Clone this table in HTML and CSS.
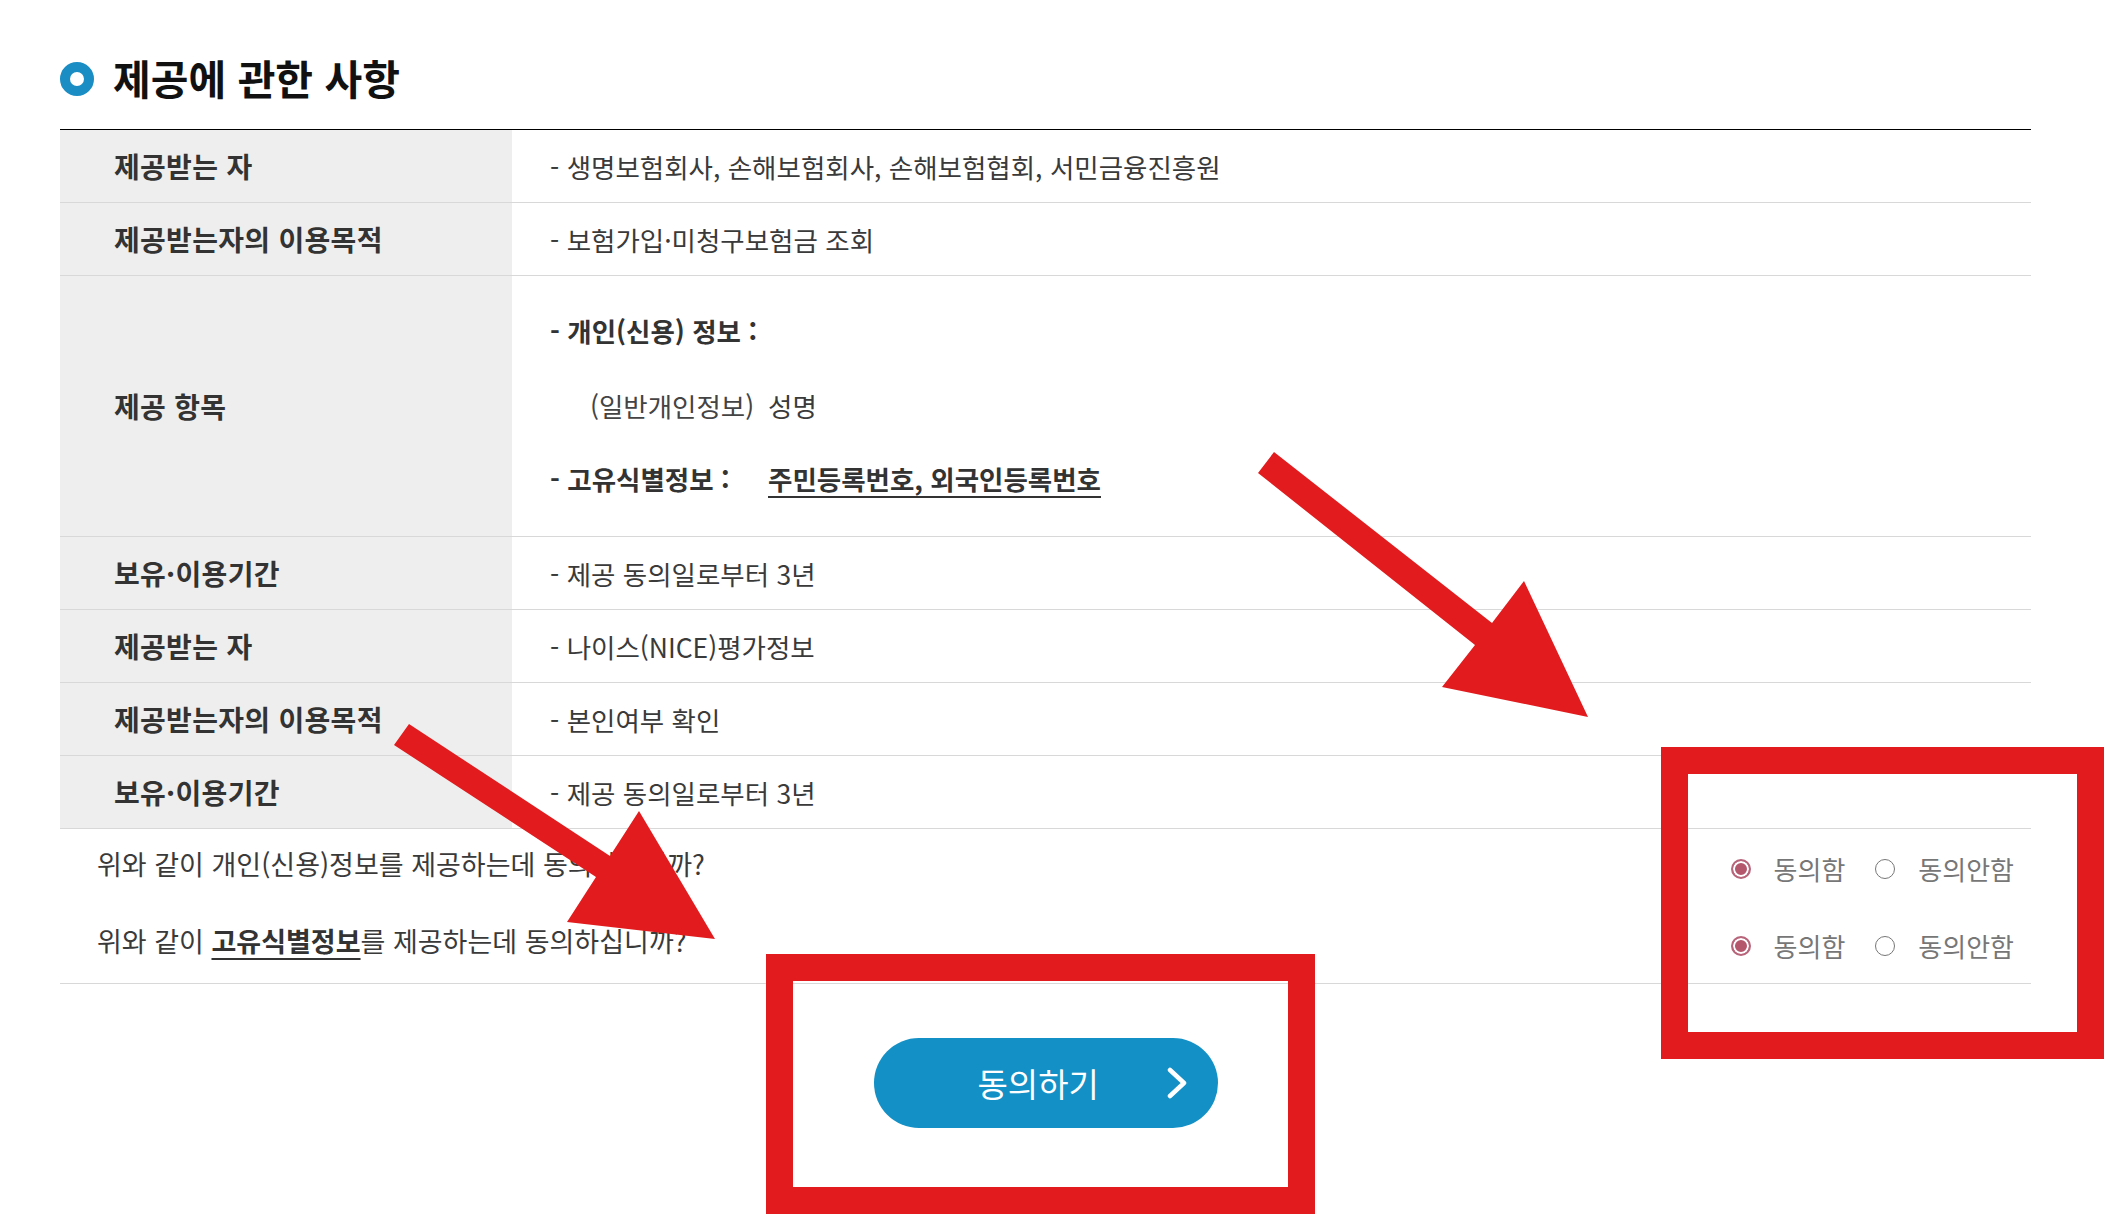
FILE: index.html
```html
<!DOCTYPE html>
<html lang="ko">
<head>
<meta charset="utf-8">
<title>제공에 관한 사항</title>
<link rel="stylesheet" href="styles.css">
</head>
<body>
<div class="page">
  <h2 class="title"><span class="ring"></span><span class="title-text">제공에 관한 사항</span></h2>

  <div class="table">
    <div class="row">
      <div class="th">제공받는 자</div>
      <div class="td">- 생명보험회사, 손해보험회사, 손해보험협회, 서민금융진흥원</div>
    </div>
    <div class="row">
      <div class="th">제공받는자의 이용목적</div>
      <div class="td">- 보험가입·미청구보험금 조회</div>
    </div>
    <div class="row row-tall">
      <div class="th">제공 항목</div>
      <div class="td">
        <div class="items">
          <div class="item-head">- 개인(신용) 정보 :</div>
          <div class="item-sub">(일반개인정보)</div>
          <div class="item-plain">성명</div>
          <div class="item-key">- 고유식별정보 :</div>
          <div class="item-val">주민등록번호, 외국인등록번호</div>
        </div>
      </div>
    </div>
    <div class="row">
      <div class="th">보유·이용기간</div>
      <div class="td">- 제공 동의일로부터 3년</div>
    </div>
    <div class="row">
      <div class="th">제공받는 자</div>
      <div class="td">- 나이스(NICE)평가정보</div>
    </div>
    <div class="row">
      <div class="th">제공받는자의 이용목적</div>
      <div class="td">- 본인여부 확인</div>
    </div>
    <div class="row">
      <div class="th">보유·이용기간</div>
      <div class="td">- 제공 동의일로부터 3년</div>
    </div>
  </div>

  <div class="consent">
    <div class="q-row">
      <p class="question">위와 같이 개인(신용)정보를 제공하는데 동의하십니까?</p>
      <div class="radios">
        <span class="radio checked"></span><span class="radio-label">동의함</span>
        <span class="radio"></span><span class="radio-label">동의안함</span>
      </div>
    </div>
    <div class="q-row">
      <p class="question">위와 같이 <strong class="key-term">고유식별정보</strong>를 제공하는데 동의하십니까?</p>
      <div class="radios">
        <span class="radio checked"></span><span class="radio-label">동의함</span>
        <span class="radio"></span><span class="radio-label">동의안함</span>
      </div>
    </div>
  </div>

  <div class="actions">
    <button class="agree-btn" type="button">
      <span class="agree-text">동의하기</span>
      <svg class="chev" width="22" height="32" viewBox="0 0 22 32"><polyline points="4,3 18,16 4,29" fill="none" stroke="#fff" stroke-width="4.5" stroke-linecap="round" stroke-linejoin="round"/></svg>
    </button>
  </div>
</div>

<svg class="annotations" width="2105" height="1214" viewBox="0 0 2105 1214">
  <polygon points="1274,452 1492,623 1524,581 1588,717 1442,687 1475,645 1258,473" fill="#e21c1e"/>
  <polygon points="409,724 610,856 639,811 715,939 567,922 596,877 394,745" fill="#e21c1e"/>
  <rect x="779.5" y="967.5" width="522" height="233" fill="none" stroke="#e21c1e" stroke-width="27"/>
  <rect x="1674.5" y="760.5" width="416" height="285" fill="none" stroke="#e21c1e" stroke-width="27"/>
</svg>
</body>
</html>
```

FILE: styles.css
```css
html, body {
  margin: 0;
  padding: 0;
  background: #fff;
  overflow: hidden;
}

body {
  font-family: "Noto Sans CJK KR", "Noto Sans", sans-serif;
  color: #333;
}

.page {
  width: 1971px;
  margin-left: 60px;
  padding-top: 47px;
}

.title {
  display: flex;
  align-items: center;
  gap: 19px;
  height: 60px;
  margin: 0 0 22px 0;
  font-size: 41px;
  font-weight: 700;
  color: #111;
}

.ring {
  width: 34px;
  height: 34px;
  box-sizing: border-box;
  border: 10px solid #1a8dc4;
  border-radius: 50%;
  flex: none;
  margin-top: 3px;
}

.table {
  border-top: 1px solid #000;
}

.row {
  display: grid;
  grid-template-columns: 452px 1fr;
  height: 72px;
  border-bottom: 1px solid #d8d8d8;
}

.row-tall {
  height: 260px;
}

.th {
  display: flex;
  align-items: center;
  padding-left: 54px;
  background: #eeeeee;
  font-size: 28px;
  letter-spacing: 0.3px;
  font-weight: 700;
  color: #333;
}

.td {
  display: flex;
  align-items: center;
  padding-left: 38px;
  font-size: 26.5px;
  color: #3a3a3a;
}

.items {
  display: grid;
  grid-template-columns: 218px auto;
  grid-template-rows: 75px 75px 71px;
  align-items: center;
  padding-bottom: 6px;
}

.item-head {
  grid-column: 1 / 3;
  font-weight: 700;
  color: #333;
}

.item-sub {
  padding-left: 40px;
  color: #444;
}

.item-key {
  font-weight: 700;
  color: #333;
}

.item-val {
  font-weight: 700;
  color: #333;
  text-decoration: underline;
  text-decoration-thickness: 2px;
  text-underline-offset: 6px;
}

.consent {
  border-bottom: 1px solid #d8d8d8;
}

.q-row {
  display: flex;
  align-items: center;
  justify-content: space-between;
  height: 77px;
  padding-left: 37px;
  padding-right: 17px;
}

.question {
  margin: 0;
  padding-bottom: 8px;
  font-size: 27px;
  color: #3a3a3a;
}

.key-term {
  font-weight: 700;
  color: #333;
  text-decoration: underline;
  text-decoration-thickness: 2px;
  text-underline-offset: 6px;
}

.radios {
  display: flex;
  align-items: center;
  padding-top: 2px;
}

.radio {
  width: 20px;
  height: 20px;
  box-sizing: border-box;
  border: 1.5px solid #777;
  border-radius: 50%;
  background: #fff;
  flex: none;
}

.radio.checked {
  border: 2px solid #b8647a;
  background: #b4566c;
  box-shadow: inset 0 0 0 2px #fff;
}

.radio-label {
  margin-left: 23px;
  margin-right: 30px;
  font-size: 26px;
  font-weight: 400;
  color: #777;
}

.radio-label:last-child {
  margin-right: 0;
}

.actions {
  display: flex;
  justify-content: center;
  padding-top: 54px;
}

.agree-btn {
  display: flex;
  align-items: center;
  width: 344px;
  height: 90px;
  padding: 0 30px 0 104px;
  border: none;
  border-radius: 45px;
  background: #1390c6;
  color: #fff;
  font-family: "Noto Sans CJK KR", "Noto Sans", sans-serif;
  font-size: 33px;
  font-weight: 400;
  box-sizing: border-box;
  cursor: pointer;
}

.chev {
  margin-left: auto;
}

.annotations {
  position: absolute;
  left: 0;
  top: 0;
  pointer-events: none;
}
```
